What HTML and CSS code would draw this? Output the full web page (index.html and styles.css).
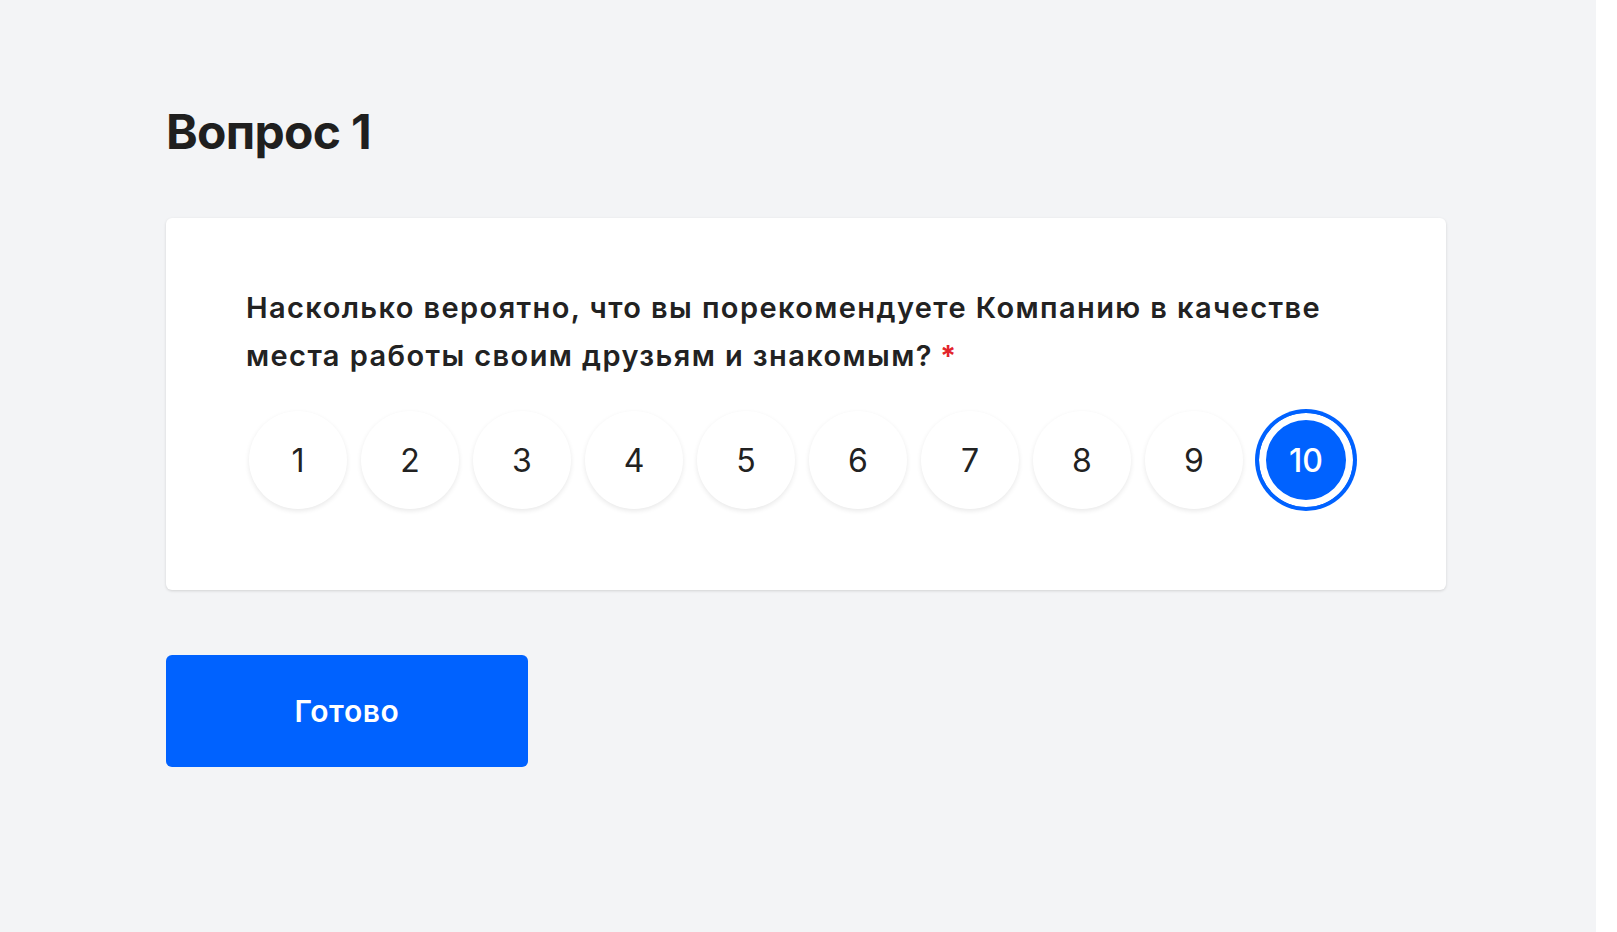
FILE: index.html
```html
<!DOCTYPE html>
<html lang="ru">
<head>
    <meta charset="UTF-8">
    <meta name="viewport" content="width=device-width, initial-scale=1.0">
    <title>Опрос</title>
    <link rel="stylesheet" href="styles.css">
</head>
<body>
    <div class="page">
        <main class="survey">
            <h1 class="survey-title">Вопрос 1</h1>

            <!-- карточка вопроса -->
            <section class="question-card">
                <p class="question-text">Насколько вероятно, что вы порекомендуете Компанию в качестве места работы своим друзьям и знакомым?<span class="required">*</span></p>
                <div class="scale">
                    <button class="score">1</button>
                    <button class="score">2</button>
                    <button class="score">3</button>
                    <button class="score">4</button>
                    <button class="score">5</button>
                    <button class="score">6</button>
                    <button class="score">7</button>
                    <button class="score">8</button>
                    <button class="score">9</button>
                    <button class="score selected">10</button>
                </div>
            </section>

            <button class="submit-btn">Готово</button>
        </main>
    </div>
</body>
</html>
```

FILE: styles.css
```css
html, body {
    margin: 0;
    padding: 0;
    background: #ffffff;
}

body {
    font-family: Inter, "Noto Sans", sans-serif;
    color: #222222;
}

.page {
    width: calc(100% - 21px);
    min-height: 100vh;
    background-color: #f3f4f6;
}

.survey {
    padding: 103px 0 0 166px;
    width: 1280px;
}

.survey-title {
    margin: 0 0 57px;
    font-size: 48px;
    line-height: 58px;
    font-weight: 700;
    letter-spacing: -0.7px;
    color: #1f1f1f;
}

.question-card {
    background: white;
    border-radius: 6px;
    box-shadow: 0 1px 3px rgba(0,0,0,0.14);
    padding: 66px 80px 81px;
}

.question-text {
    margin: 0;
    font-size: 29px;
    line-height: 48px;
    font-weight: 600;
    letter-spacing: 1.4px;
    color: #222222;
}

.required {
    display: inline-block;
    margin-left: 7px;
    color: #e3242b;
    font-weight: 700;
}

.scale {
    display: flex;
    gap: 14px;
    margin-top: 31px;
    padding-left: 3px;
}

.score {
    width: 98px;
    height: 98px;
    border: none;
    border-radius: 50%;
    background: white;
    box-shadow: 0 2px 5px rgba(0,0,0,0.09);
    font-family: Inter, "Noto Sans", sans-serif;
    font-size: 32px;
    font-weight: 400;
    color: #222222;
    cursor: pointer;
    padding: 0;
}

.score.selected {
    background: #0062ff;
    border: 2px solid #0062ff;
    color: white;
    font-weight: 500;
    box-shadow: inset 0 0 0 7px white, 0 0 0 2px #0062ff;
}

.submit-btn {
    display: block;
    margin-top: 65px;
    width: 362px;
    height: 112px;
    border: none;
    border-radius: 6px;
    background: #0062ff;
    color: white;
    font-family: Inter, "Noto Sans", sans-serif;
    font-size: 30px;
    font-weight: 600;
    letter-spacing: 0.6px;
    cursor: pointer;
}

.submit-btn:hover {
    background: #0056e0;
}
```
